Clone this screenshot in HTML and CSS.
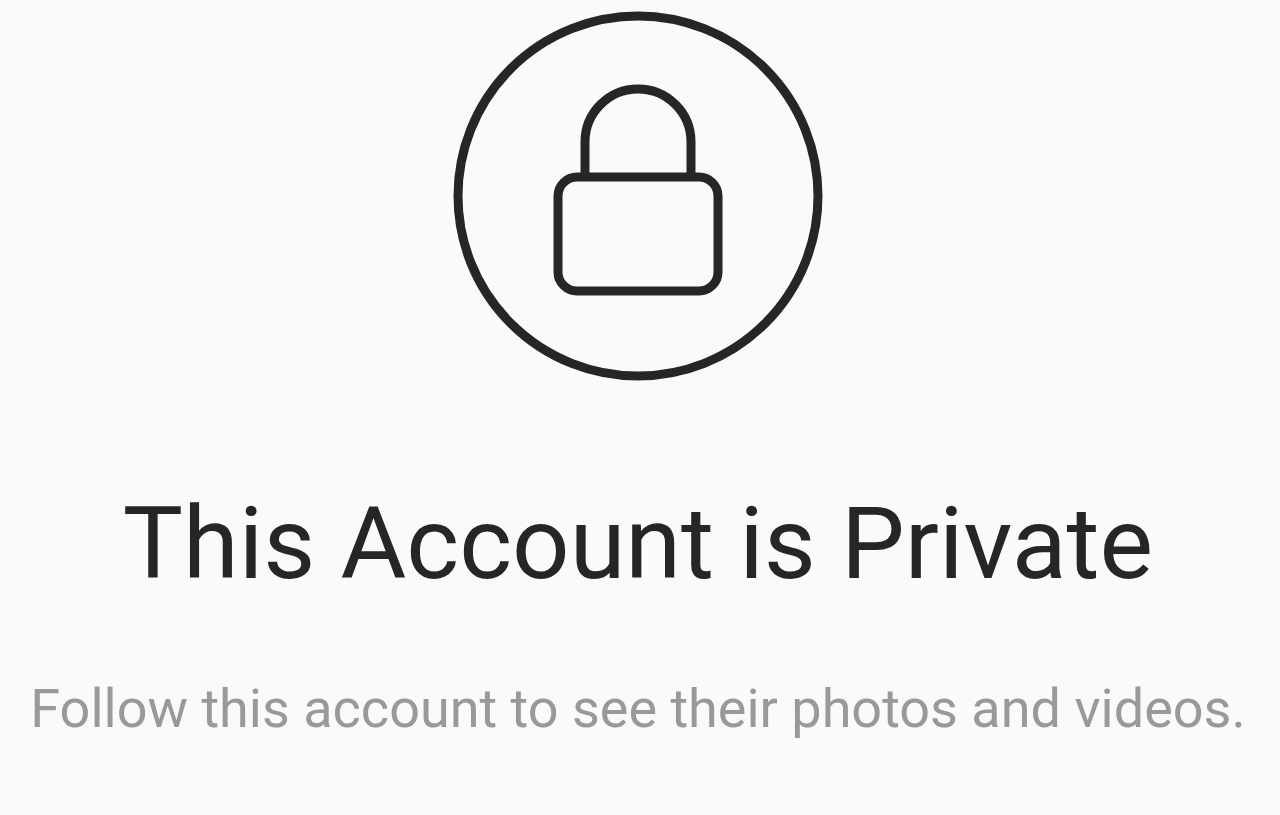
FILE: index.html
```html
<!DOCTYPE html>
<html lang="en">

<head>
    <meta charset="UTF-8">
    <meta name="viewport" content="width=device-width, initial-scale=1.0">
    <title>Private Account</title>
    <link rel="stylesheet" href="styles.css">
</head>

<body>
    <main class="private">
        <svg class="lock" viewBox="0 0 370 370" aria-hidden="true">
            <circle cx="185" cy="185" r="180" />
            <path d="M132 166V131a53 53 0 0 1 106 0v35" />
            <rect x="105" y="166" width="160" height="114" rx="19" />
        </svg>
        <h1>This Account is Private</h1>
        <p>Follow this account to see their photos and videos.</p>
    </main>
</body>

</html>
```
FILE: styles.css
```css
body {
    margin: 0;
    background-color: #fafafa;
    font-family: Roboto, sans-serif;
}

.private {
    padding: 11px 18px 11px 14px;
    text-align: center;
}

.lock {
    display: block;
    width: 370px;
    margin: 0 auto;
    fill: none;
    stroke: #262626;
    stroke-width: 9px;
}

h1 {
    margin: 103px 0 0;
    font-size: 101px;
    line-height: 120px;
    font-weight: 400;
    color: #262626;
}

p {
    margin: 73px 0 0;
    font-size: 54px;
    line-height: 64px;
    color: #999;
}
```
